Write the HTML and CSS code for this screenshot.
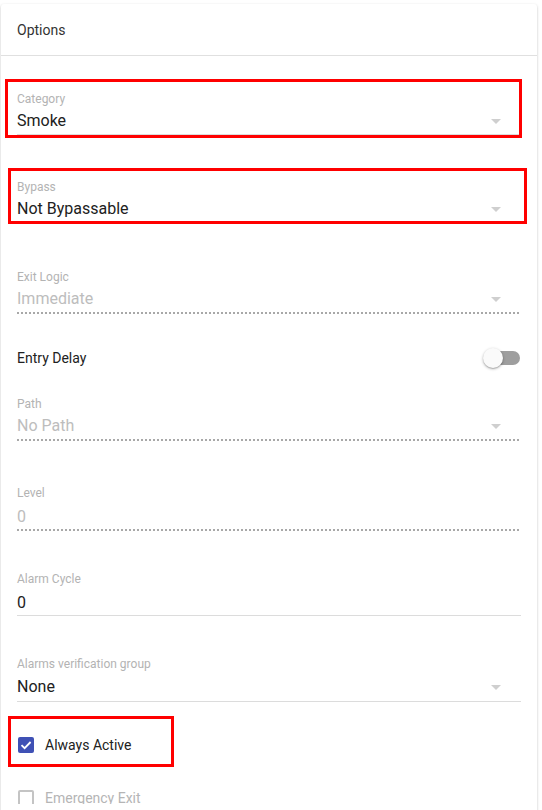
FILE: index.html
```html
<!DOCTYPE html>
<html>
<head>
<meta charset="utf-8">
<link rel="stylesheet" href="styles.css">
</head>
<body>
<div class="card">
  <div class="card-header">Options</div>
  <div class="card-body">
    <div class="field select annot annot-cat">
      <div class="label">Category</div>
      <div class="value-row"><span class="value">Smoke</span><span class="arrow"></span></div>
      <div class="underline"></div>
    </div>
    <div class="field select annot annot-bypass">
      <div class="label">Bypass</div>
      <div class="value-row"><span class="value">Not Bypassable</span><span class="arrow"></span></div>
      <div class="underline"></div>
    </div>
    <div class="field select disabled">
      <div class="label">Exit Logic</div>
      <div class="value-row"><span class="value">Immediate</span><span class="arrow"></span></div>
      <div class="underline dotted"></div>
    </div>
    <div class="toggle-row">
      <span class="toggle-label">Entry Delay</span>
      <span class="toggle"><span class="track"></span><span class="thumb"></span></span>
    </div>
    <div class="field select disabled">
      <div class="label">Path</div>
      <div class="value-row"><span class="value">No Path</span><span class="arrow"></span></div>
      <div class="underline dotted"></div>
    </div>
    <div class="field input disabled">
      <div class="label">Level</div>
      <div class="value-row"><span class="value">0</span></div>
      <div class="underline dotted"></div>
    </div>
    <div class="field input">
      <div class="label">Alarm Cycle</div>
      <div class="value-row"><span class="value">0</span></div>
      <div class="underline"></div>
    </div>
    <div class="field select last">
      <div class="label">Alarms verification group</div>
      <div class="value-row"><span class="value">None</span><span class="arrow"></span></div>
      <div class="underline"></div>
    </div>
    <div class="check-row annot annot-check">
      <span class="checkbox checked">
        <svg viewBox="0 0 16 16" width="16" height="16"><path d="M3.5 8.2 L6.6 11.2 L12.6 5" fill="none" stroke="#fff" stroke-width="1.8"/></svg>
      </span>
      <span class="check-label">Always Active</span>
    </div>
    <div class="check-row disabled">
      <span class="checkbox"></span>
      <span class="check-label">Emergency Exit</span>
    </div>
  </div>
</div>
</body>
</html>
```
FILE: styles.css
```css
html, body {
  margin: 0;
  padding: 0;
  background: #ffffff;
  height: 810px;
  overflow: hidden;
}
body {
  font-family: Roboto, "Liberation Sans", sans-serif;
  color: rgba(0,0,0,0.87);
}
.card {
  margin: 4px 5px 0 1px;
  background: #fff;
  border-radius: 3px 3px 0 0;
  box-shadow: 0 1px 3px rgba(0,0,0,0.2), 0 1px 1px rgba(0,0,0,0.12);
  height: 820px;
}
.card-header {
  padding: 16px 0 15px 16px;
  line-height: 20px;
  font-size: 14px;
  color: #333;
  border-bottom: 1px solid #e0e0e0;
  box-sizing: content-box;
  height: 20px;
}
.card-body {
  padding: 36px 16px 0 16px;
  height: 712px;
  overflow: hidden;
}
.field {
  margin-bottom: 45px;
}
.annot-bypass {
  margin-bottom: 47px;
}
.label {
  font-size: 12px;
  line-height: 14px;
  color: #b3b3b3;
}
.value-row {
  display: flex;
  align-items: center;
  justify-content: space-between;
  height: 22px;
  margin-top: 4px;
}
.value {
  font-size: 16px;
  line-height: 22px;
  color: #212121;
}
.arrow {
  width: 0;
  height: 0;
  border-left: 5px solid transparent;
  border-right: 5px solid transparent;
  border-top: 5px solid #cfcfcf;
  margin-right: 20px;
}
.underline {
  margin-top: 2px;
  height: 1px;
  background: #dcdcdc;
}
.underline.dotted {
  height: 2px;
  background: linear-gradient(to right, #a8a8a8 0, #a8a8a8 50%, transparent 50%);
  background-size: 4px 2px;
  background-repeat: repeat-x;
}
.disabled .value {
  color: #bdbdbd;
}
.input .value-row {
  margin-top: 6px;
}
.input .underline {
  margin-top: 1px;
}
.input {
  margin-bottom: 41px;
}
.field.last {
  margin-bottom: 0;
}
.field.last .value-row {
  margin-top: 5px;
}
.field.last .underline {
  margin-top: 3px;
}
.toggle-row {
  display: flex;
  align-items: center;
  justify-content: space-between;
  height: 24px;
  margin-top: -13px;
  margin-bottom: 27px;
}
.toggle-label {
  font-size: 14px;
  color: #212121;
}
.toggle {
  position: relative;
  width: 37px;
  height: 20px;
  margin-right: 1px;
  display: block;
}
.track {
  position: absolute;
  left: 1px;
  right: 0;
  top: 3px;
  height: 14px;
  border-radius: 7px;
  background: #9e9e9e;
}
.thumb {
  position: absolute;
  left: 0;
  top: 0;
  width: 20px;
  height: 20px;
  border-radius: 50%;
  background: #fafafa;
  box-shadow: 0 1px 3px rgba(0,0,0,0.3), 0 1px 1px rgba(0,0,0,0.14);
}
.check-row {
  display: flex;
  align-items: center;
  height: 20px;
  margin-top: 33px;
}
.check-row + .check-row {
  margin-top: 33px;
}
.checkbox {
  width: 16px;
  height: 16px;
  box-sizing: border-box;
  border: 2px solid #c4c4c4;
  border-radius: 2px;
  margin-left: 1px;
  margin-right: 11px;
  display: flex;
  align-items: center;
  justify-content: center;
}
.checkbox.checked {
  border: none;
  background: #3f51b5;
}
.checkbox svg {
  display: block;
}
.check-label {
  font-size: 14px;
  color: #212121;
}
.check-row.disabled .check-label {
  color: #b5b5b5;
}
.annot {
  position: relative;
}
.annot::after {
  content: "";
  position: absolute;
  border: 3px solid #ff0000;
  pointer-events: none;
}
.annot-cat::after {
  left: -12px;
  right: -1px;
  top: -13px;
  bottom: -3px;
}
.annot-bypass::after {
  left: -9px;
  right: -6px;
  top: -12px;
  bottom: -1px;
}
.annot-check::after {
  left: -9px;
  width: 160px;
  top: -19px;
  bottom: -12px;
}
```
